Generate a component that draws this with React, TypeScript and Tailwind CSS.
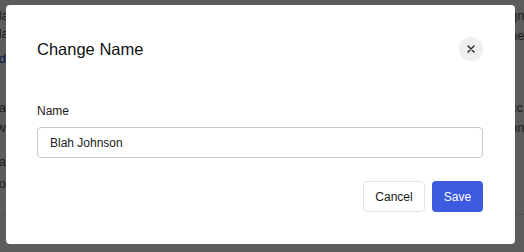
import React, { useState } from 'react';

const leftPeeks = [
  { top: 8, text: 'Bla', color: 'text-[#555]' },
  { top: 26, text: 'Bla', color: 'text-[#555]' },
  { top: 51, text: 'Edc', color: 'text-[#2a4bd0]' },
  { top: 100, text: 'Ear', color: 'text-[#555]' },
  { top: 120, text: 'Jwa', color: 'text-[#555]' },
  { top: 154, text: 'Ear', color: 'text-[#555]' },
  { top: 176, text: 'Bot', color: 'text-[#555]' },
];

const rightPeeks = [
  { top: 8, text: 'gn' },
  { top: 28, text: 'ne' },
  { top: 100, text: 'cc' },
  { top: 120, text: 'on' },
];

const App: React.FC = () => {
  const [name, setName] = useState('Blah Johnson');

  return (
    <div className="relative w-[524px] h-[252px] overflow-hidden bg-white font-['Liberation_Sans',Arial,sans-serif]">
      {/* page behind the dialog */}
      {leftPeeks.map((p) => (
        <span
          key={p.top}
          className={`absolute left-[-10px] text-[13px] leading-[16px] ${p.color}`}
          style={{ top: p.top }}
        >
          {p.text}
        </span>
      ))}
      {rightPeeks.map((p) => (
        <span
          key={p.top}
          className="absolute left-[510px] text-[13px] leading-[16px] text-[#555]"
          style={{ top: p.top }}
        >
          {p.text}
        </span>
      ))}
      <div className="absolute left-0 right-0 top-[214px] h-px bg-[#ddd]" />

      {/* backdrop */}
      <div className="absolute inset-0 bg-black/[0.64] pt-[5px] pl-[6px]">
        <div className="w-[509px] h-[239px] bg-white rounded-[4px] pl-[31px] pr-[32px] pt-[32px] flex flex-col">
          <div className="flex items-center justify-between h-[24px]">
            <h2 className="text-[16.5px] text-[#111] leading-none">Change Name</h2>
            <button className="w-[24px] h-[24px] rounded-full bg-[#efefef] flex items-center justify-center">
              <svg width="8" height="8" viewBox="0 0 8 8" fill="none" stroke="#222" strokeWidth="1.4" strokeLinecap="round">
                <path d="M1 1L7 7M7 1L1 7" />
              </svg>
            </button>
          </div>

          <label htmlFor="name" className="mt-[42px] text-[12px] leading-[16px] text-[#1a1a1a]">
            Name
          </label>
          <input
            id="name"
            value={name}
            onChange={(e) => setName(e.target.value)}
            className="mt-[8px] h-[31px] w-full rounded-[4px] border border-[#c9c9c9] px-[12px] text-[12px] text-[#222] outline-none"
          />

          <div className="mt-[23px] flex justify-end gap-[7px]">
            <button className="h-[31px] w-[62px] rounded-[4px] border border-[#e3e3e3] bg-white text-[12px] text-[#1a1a1a]">
              Cancel
            </button>
            <button className="h-[31px] w-[51px] rounded-[4px] bg-[#3d5be0] text-[12px] text-white">
              Save
            </button>
          </div>
        </div>
      </div>
    </div>
  );
};

export default App;
